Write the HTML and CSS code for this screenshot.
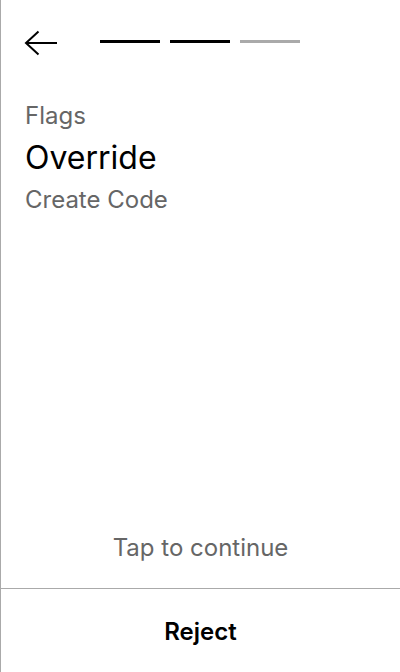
FILE: index.html
```
<!DOCTYPE html>
<html>
<head>
<meta charset="utf-8">
<link rel="stylesheet" href="styles.css">
</head>
<body>
<div class="screen">
  <header class="top">
    <button class="back" aria-label="Back">
      <svg width="34" height="28" viewBox="0 0 34 28" fill="none" stroke="#000" stroke-width="2">
        <path d="M33 13H2"/>
        <path d="M14.5 1.5L2 13l12.5 11.5"/>
      </svg>
    </button>
    <div class="steps">
      <span class="step done"></span>
      <span class="step done"></span>
      <span class="step"></span>
    </div>
  </header>
  <main class="content">
    <div class="label">Flags</div>
    <h1 class="title">Override</h1>
    <div class="sub">Create Code</div>
  </main>
  <div class="tap">Tap to continue</div>
  <footer class="footer">
    <button class="reject">Reject</button>
  </footer>
</div>
</body>
</html>
```
FILE: styles.css
```
html, body {
  margin: 0;
  padding: 0;
  background: #fff;
}
.screen {
  box-sizing: border-box;
  width: 400px;
  height: 672px;
  border-left: 1px solid #aaa;
  display: flex;
  flex-direction: column;
  font-family: Inter, "Noto Sans", sans-serif;
  color: #000;
}
.top {
  display: flex;
  align-items: flex-start;
  padding: 30px 0 0 23px;
  height: 28px;
}
.back {
  border: 0;
  background: none;
  padding: 0;
  width: 34px;
  height: 28px;
  display: block;
}
.back svg { display: block; }
.steps {
  display: flex;
  gap: 10px;
  margin-left: 42px;
  margin-top: 10px;
}
.step {
  width: 60px;
  height: 3px;
  background: #aaa;
}
.step.done { background: #000; }
.content {
  padding: 44px 24px 0 24px;
  flex: 1;
}
.label {
  font-size: 24px;
  line-height: 28px;
  color: #666;
}
.title {
  margin: 10px 0 0;
  font-size: 32px;
  font-weight: 400;
  line-height: 36px;
}
.sub {
  margin-top: 10px;
  font-size: 24px;
  line-height: 28px;
  color: #666;
}
.tap {
  text-align: center;
  font-size: 24px;
  line-height: 28px;
  color: #666;
  padding-bottom: 26px;
}
.footer {
  border-top: 1px solid #aaa;
  height: 83px;
  display: flex;
  align-items: center;
  justify-content: center;
}
.reject {
  border: 0;
  background: none;
  font-family: Inter, "Noto Sans", sans-serif;
  font-size: 24px;
  font-weight: 600;
  color: #000;
  padding: 0;
  margin-top: 2px;
}
```
